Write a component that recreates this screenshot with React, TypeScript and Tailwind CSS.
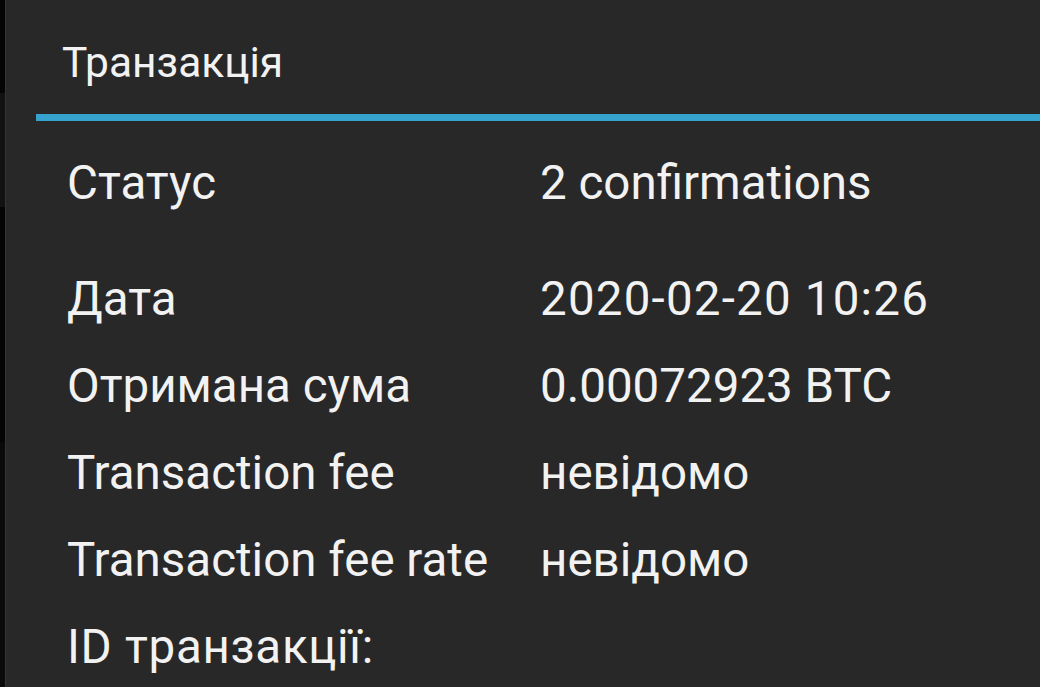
import React from "react";

const rows: [string, string, string, string][] = [
  ["Дата", "2020-02-20 10:26", "", "tracking-[1.2px]"],
  ["Отримана сума", "0.00072923 BTC", "", ""],
  ["Transaction fee", "невідомо", "", ""],
  ["Transaction fee rate", "невідомо", "", ""],
  ["ID транзакції:", "", "tracking-[0.7px]", ""],
];

function Row({ label, value, lcls, vcls }: { label: string; value: string; lcls: string; vcls: string }) {
  return (
    <div className="flex h-[87px] shrink-0">
      <div className={"w-[473px] shrink-0 whitespace-nowrap " + lcls}>{label}</div>
      <div className={"whitespace-nowrap " + vcls}>{value}</div>
    </div>
  );
}

export default function App() {
  return (
    <div
      className="flex h-[687px] w-[1040px] overflow-hidden bg-[#282828] text-[#f2f2f2]"
      style={{ fontFamily: "Roboto, 'Noto Sans', sans-serif" }}
    >
      <div className="flex w-[5px] shrink-0 flex-col">
        <div className="h-[93px] bg-[#050505]" />
        <div className="h-[114px] bg-[#121212]" />
        <div className="h-[236px] bg-[#050505]" />
        <div className="flex-1 bg-[#0a0a0a]" />
      </div>
      <div className="w-[1px] shrink-0 bg-[#343434]" />
      <div className="flex flex-1 flex-col">
        <div className="h-[114px] shrink-0 pl-[56px] pt-[42px] text-[42.5px] leading-none">
          Транзакція
        </div>
        <div className="ml-[30px] h-[7px] shrink-0 bg-[#36a3cf]" />
        <div className="flex flex-col pl-[61px] pt-[39px] text-[47.5px] leading-none">
          <div className="flex h-[116px] shrink-0">
            <div className="w-[473px] shrink-0 whitespace-nowrap">Статус</div>
            <div className="whitespace-nowrap">2 confirmations</div>
          </div>
          {rows.map(([l, v, lc, vc]) => (
            <Row key={l} label={l} value={v} lcls={lc} vcls={vc} />
          ))}
        </div>
      </div>
    </div>
  );
}
